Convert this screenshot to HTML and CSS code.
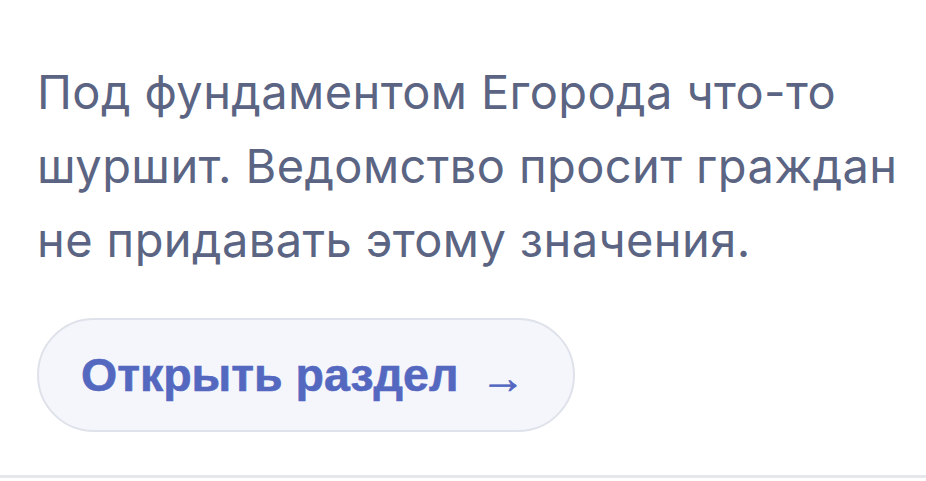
FILE: index.html
```html
<!DOCTYPE html>
<html lang="ru">
<head>
    <meta charset="UTF-8">
    <meta name="viewport" content="width=device-width, initial-scale=1.0">
    <title>Егород — новости</title>
    <link rel="stylesheet" href="styles.css">
</head>
<body>
    <section class="notice">
        <p class="notice-text">Под фундаментом Егорода что-то шуршит. Ведомство просит граждан не придавать этому значения.</p>
        <a class="notice-link" href="#">Открыть раздел <span class="arrow">→</span></a>
    </section>
</body>
</html>
```

FILE: styles.css
```css
body {
    margin: 0;
    background: #fff;
    font-family: Inter, "Noto Sans", sans-serif;
}
.notice {
    height: 478px;
    box-sizing: border-box;
    padding: 55px 20px 0 37px;
    border-bottom: 3px solid #e5e7eb;
}
.notice-text {
    margin: 0;
    font-size: 47px;
    letter-spacing: 0.4px;
    line-height: 74px;
    color: #5b6583;
    max-width: 880px;
}
.notice-link {
    display: inline-flex;
    align-items: center;
    margin-top: 41px;
    height: 114px;
    padding: 0 48px 0 42px;
    box-sizing: border-box;
    border: 2px solid #dfe2ea;
    border-radius: 60px;
    background: #f4f6fc;
    color: #5468c0;
    text-decoration: none;
    font-family: "Liberation Sans", Arial, sans-serif;
    font-weight: bold;
    font-size: 46.5px;
    -webkit-text-stroke: 0.6px #5468c0; /* a touch heavier than plain bold */
}
.arrow {
    margin-left: 22px;
    font-size: 45px;
    position: relative;
    top: 3px;
}
```
